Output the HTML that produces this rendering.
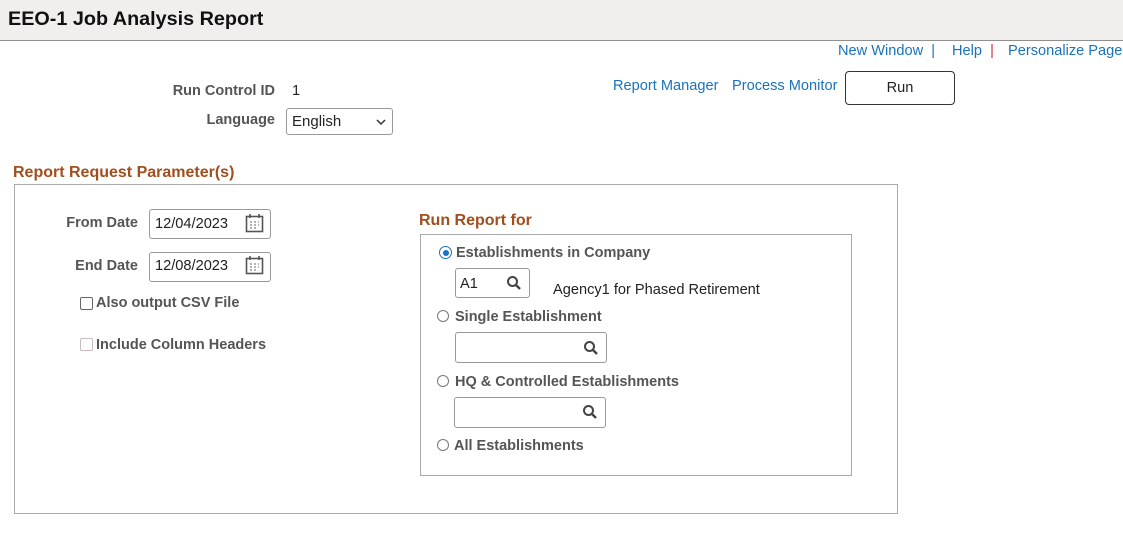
<!DOCTYPE html>
<html><head><style>
body{margin:0;width:1123px;height:540px;background:#fff;font-family:"Liberation Sans",Arial,sans-serif;position:relative;overflow:hidden}
.a{position:absolute;white-space:nowrap}
.hdr{position:absolute;left:0;top:0;width:1123px;height:40px;background:#f0efee;border-bottom:1px solid #8f8f8f}
.lbl{font-size:14.5px;font-weight:bold;color:#555}
.lnk{font-size:14.6px;color:#1a73ba}
.sec{font-size:16px;font-weight:bold;color:#a14f1e}
.box{position:absolute;border:1px solid #999;border-radius:3px;background:#fff;box-sizing:border-box}
.txt{font-size:14.6px;color:#222}
.rad{position:absolute;width:12px;height:12px;border:1px solid #777;border-radius:50%;box-sizing:border-box}
</style></head><body>
<div class="hdr"></div>
<div class="a" style="left:8px;top:8px;font-size:19.8px;font-weight:bold;color:#111">EEO-1 Job Analysis Report</div>
<div class="a lnk" style="left:838px;top:43px">New Window <span style="color:#1a73ba">&nbsp;|</span></div>
<div class="a lnk" style="left:952px;top:43px">Help <span style="color:#c33">&nbsp;|</span></div>
<div class="a lnk" style="left:1008px;top:43px">Personalize Page</div>
<div class="a lbl" style="right:848px;top:83px">Run Control ID</div>
<div class="a txt" style="left:292px;top:83px">1</div>
<div class="a lbl" style="right:848px;top:112px">Language</div>
<div class="box" style="left:286px;top:108px;width:107px;height:27px"></div>
<div class="a txt" style="left:292px;top:113px;font-size:15px">English</div>
<svg class="a" style="left:376px;top:118px" width="10" height="8"><path d="M1 2l4 4 4-4" stroke="#333" stroke-width="1.5" fill="none"/></svg>
<div class="a lnk" style="left:613px;top:78px">Report Manager</div>
<div class="a lnk" style="left:732px;top:78px">Process Monitor</div>
<div class="box" style="left:845px;top:71px;width:110px;height:34px;border-color:#333;border-radius:4px"></div>
<div class="a" style="left:845px;top:80px;width:110px;text-align:center;font-size:14.6px;color:#222">Run</div>

<div class="a sec" style="left:13px;top:164px">Report Request Parameter(s)</div>
<div class="a" style="left:14px;top:184px;width:882px;height:328px;border:1px solid #aaa"></div>

<div class="a lbl" style="right:985px;top:215px">From Date</div>
<div class="box" style="left:149px;top:209px;width:122px;height:30px"></div>
<div class="a txt" style="left:155px;top:216px">12/04/2023</div>
<div class="a lbl" style="right:985px;top:258px">End Date</div>
<div class="box" style="left:149px;top:252px;width:122px;height:30px"></div>
<div class="a txt" style="left:155px;top:258px">12/08/2023</div>
<svg class="a" style="left:245px;top:213px" width="20" height="20"><rect x="1.5" y="3.5" width="16" height="15" fill="none" stroke="#555" stroke-width="1.6"/><path d="M5 1v4M14 1v4" stroke="#555" stroke-width="1.6"/><path d="M5 9h2M9 9h2M13 9h1M5 12h2M9 12h2M13 12h1M5 15h2M9 15h2" stroke="#666"/></svg>
<svg class="a" style="left:245px;top:255px" width="20" height="20"><rect x="1.5" y="3.5" width="16" height="15" fill="none" stroke="#555" stroke-width="1.6"/><path d="M5 1v4M14 1v4" stroke="#555" stroke-width="1.6"/><path d="M5 9h2M9 9h2M13 9h1M5 12h2M9 12h2M13 12h1M5 15h2M9 15h2" stroke="#666"/></svg>
<div class="a" style="left:80px;top:297px;width:13px;height:13px;border:1.5px solid #666;border-radius:2px;box-sizing:border-box"></div>
<div class="a lbl" style="left:96px;top:295px">Also output CSV File</div>
<div class="a" style="left:80px;top:338px;width:13px;height:13px;border:1.5px solid #c8bcbc;border-radius:2px;box-sizing:border-box"></div>
<div class="a lbl" style="left:96px;top:337px">Include Column Headers</div>

<div class="a sec" style="left:419px;top:212px">Run Report for</div>
<div class="a" style="left:420px;top:234px;width:430px;height:240px;border:1px solid #aaa"></div>
<div class="rad" style="left:439px;top:246px;width:13px;height:13px;border-color:#1a6fc9;border-width:1.5px"></div>
<div class="a" style="left:442.5px;top:249.5px;width:6px;height:6px;background:#1a6fc9;border-radius:50%"></div>
<div class="a lbl" style="left:456px;top:245px">Establishments in Company</div>
<div class="box" style="left:455px;top:268px;width:75px;height:30px"></div>
<div class="a txt" style="left:460px;top:276px">A1</div>
<div class="a txt" style="left:553px;top:282px">Agency1 for Phased Retirement</div>
<div class="rad" style="left:437px;top:310px"></div>
<div class="a lbl" style="left:455px;top:309px">Single Establishment</div>
<div class="box" style="left:455px;top:332px;width:152px;height:31px"></div>
<div class="rad" style="left:437px;top:375px"></div>
<div class="a lbl" style="left:455px;top:374px">HQ &amp; Controlled Establishments</div>
<div class="box" style="left:454px;top:397px;width:152px;height:31px"></div>
<div class="rad" style="left:437px;top:439px"></div>
<div class="a lbl" style="left:454px;top:438px">All Establishments</div>
<svg class="a" style="left:506px;top:275px" width="16" height="16"><circle cx="6.5" cy="6.5" r="4.5" fill="none" stroke="#444" stroke-width="2"/><path d="M10 10l4 4" stroke="#444" stroke-width="2.4"/></svg>
<svg class="a" style="left:583px;top:340px" width="16" height="16"><circle cx="6.5" cy="6.5" r="4.5" fill="none" stroke="#444" stroke-width="2"/><path d="M10 10l4 4" stroke="#444" stroke-width="2.4"/></svg>
<svg class="a" style="left:582px;top:404px" width="16" height="16"><circle cx="6.5" cy="6.5" r="4.5" fill="none" stroke="#444" stroke-width="2"/><path d="M10 10l4 4" stroke="#444" stroke-width="2.4"/></svg>
</body></html>
